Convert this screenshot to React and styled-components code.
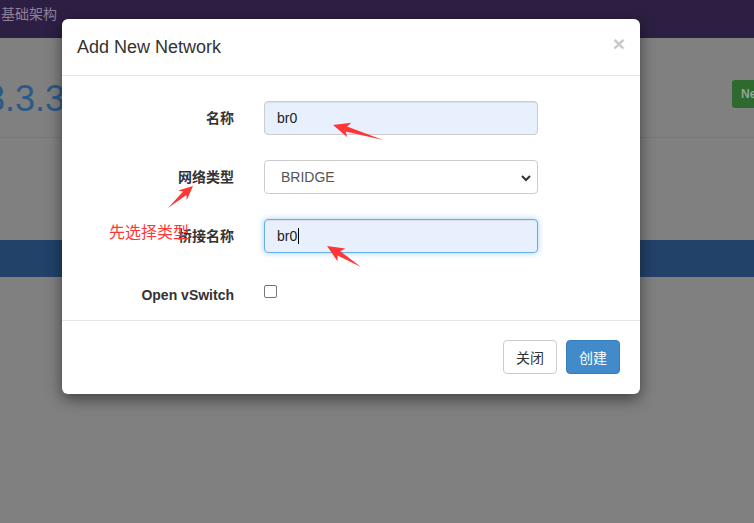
import styled, { createGlobalStyle } from "styled-components";

const GlobalStyle = createGlobalStyle`
  html, body {
    margin: 0;
    padding: 0;
  }
  body {
    width: 754px;
    height: 523px;
    overflow: hidden;
    background: #808080;
    font-family: "Liberation Sans", "Noto Sans CJK SC", sans-serif;
  }
`;

const arrowPoints = (tip, tail, headLen, headHalf, neckHalf) => {
  const dx = tail[0] - tip[0];
  const dy = tail[1] - tip[1];
  const len = Math.hypot(dx, dy);
  const d = [dx / len, dy / len];
  const n = [-d[1], d[0]];
  const at = (k, w) => [tip[0] + d[0] * k + n[0] * w, tip[1] + d[1] * k + n[1] * w];
  const pts = [
    tip,
    at(headLen, -headHalf),
    at(headLen - 3, -neckHalf),
    tail,
    at(headLen - 3, neckHalf),
    at(headLen, headHalf),
  ];
  return pts.map((p) => p.map((v) => v.toFixed(1)).join(",")).join(" ");
};

const arrows = [
  { tip: [333, 125], tail: [383, 140], head: 17, half: 7.5, neck: 2.5 },
  { tip: [193, 186], tail: [168, 208], head: 14, half: 6.5, neck: 2.5 },
  { tip: [327, 246], tail: [361, 267], head: 17, half: 7.5, neck: 2.5 },
];

const fields = [
  { label: "名称", kind: "text", value: "br0" },
  { label: "网络类型", kind: "select", value: "BRIDGE" },
  { label: "桥接名称", kind: "text", value: "br0", focused: true },
  { label: "Open vSwitch", kind: "check" },
];

const App = () => {
  return (
    <>
      <GlobalStyle />
      <Page>
        <TopBar>
          <TopTitle>基础架构</TopTitle>
        </TopBar>
        <PageHeader>
          <Version>3.3.3</Version>
          <NewButton>New</NewButton>
        </PageHeader>
        <PanelBar />
      </Page>

      <Modal>
        <ModalHeader>
          <ModalTitle>Add New Network</ModalTitle>
          <Close>×</Close>
        </ModalHeader>
        <ModalBody>
          {fields.map((f) => (
            <FormRow key={f.label}>
              <Label>{f.label}</Label>
              {f.kind === "text" && (
                <TextField $focused={f.focused}>
                  {f.value}
                  {f.focused && <Caret />}
                </TextField>
              )}
              {f.kind === "select" && (
                <SelectField>
                  <span>{f.value}</span>
                  <Chevron viewBox="0 0 12 12">
                    <path d="M2 4 L6 8 L10 4" fill="none" stroke="#333" strokeWidth="2" />
                  </Chevron>
                </SelectField>
              )}
              {f.kind === "check" && (
                <CheckWrap>
                  <CheckBox />
                </CheckWrap>
              )}
            </FormRow>
          ))}
        </ModalBody>
        <ModalFooter>
          <Button>关闭</Button>
          <Button $primary>创建</Button>
        </ModalFooter>
      </Modal>

      <Note>先选择类型</Note>
      <Arrows width="754" height="523" viewBox="0 0 754 523">
        {arrows.map((a, i) => (
          <polygon
            key={i}
            points={arrowPoints(a.tip, a.tail, a.head, a.half, a.neck)}
            fill="#ff3636"
          />
        ))}
      </Arrows>
    </>
  );
};

const Page = styled.div`
  width: 754px;
  height: 523px;
  display: flex;
  flex-direction: column;
  background: #808080;
`;

const TopBar = styled.div`
  height: 38px;
  display: flex;
  align-items: flex-start;
  background: #2d1f43;
`;

const TopTitle = styled.span`
  margin: 4px 0 0 1px;
  color: #8b809e;
  font-size: 14px;
  line-height: 18px;
  font-family: "Noto Sans CJK SC", sans-serif;
`;

const PageHeader = styled.div`
  height: 99px;
  display: flex;
  justify-content: space-between;
  align-items: flex-start;
  border-bottom: 1px solid #787878;
`;

const Version = styled.h1`
  margin: 41px 0 0 -15px;
  color: #2b5a86;
  font-size: 36px;
  font-weight: 400;
  line-height: 40px;
`;

const NewButton = styled.div`
  margin: 42px -38px 0 0;
  width: 60px;
  height: 28px;
  padding-left: 9px;
  box-sizing: border-box;
  border-radius: 3px;
  background: #2e6a30;
  color: #8fa58f;
  font-size: 12px;
  font-weight: 700;
  line-height: 28px;
`;

const PanelBar = styled.div`
  margin-top: 102px;
  height: 37px;
  background: #22426a;
`;

const Modal = styled.div`
  position: absolute;
  top: 19px;
  left: 62px;
  width: 578px;
  background: #fff;
  border-radius: 6px;
  box-shadow: 0 5px 15px rgba(0, 0, 0, 0.5);
`;

const ModalHeader = styled.div`
  display: flex;
  justify-content: space-between;
  align-items: center;
  height: 56px;
  padding: 0 15px;
  border-bottom: 1px solid #e5e5e5;
`;

const ModalTitle = styled.h4`
  margin: 0;
  color: #333;
  font-size: 18px;
  font-weight: 400;
  line-height: 26px;
`;

const Close = styled.span`
  margin-top: -8px;
  color: #c9c9c9;
  font-size: 21px;
  font-weight: 700;
  line-height: 1;
`;

const ModalBody = styled.div`
  display: grid;
  row-gap: 25px;
  padding: 25px 0 15px;
`;

const FormRow = styled.div`
  display: grid;
  grid-template-columns: 172px 274px;
  column-gap: 30px;
  align-items: start;
`;

const Label = styled.label`
  padding-top: 7px;
  text-align: right;
  color: #333;
  font-size: 14px;
  font-weight: 700;
  line-height: 20px;
  font-family: "Liberation Sans", "Noto Sans CJK SC", sans-serif;
`;

const TextField = styled.div`
  height: 34px;
  box-sizing: border-box;
  padding: 0 12px;
  display: flex;
  align-items: center;
  border: 1px solid ${({ $focused }) => ($focused ? "#66afe9" : "#ccc")};
  border-radius: 4px;
  background: #e8f0fe;
  color: #222;
  font-size: 14px;
  box-shadow: ${({ $focused }) =>
    $focused
      ? "inset 0 1px 1px rgba(0,0,0,.075), 0 0 6px rgba(102,175,233,.6)"
      : "inset 0 1px 1px rgba(0,0,0,.075)"};
`;

const Caret = styled.span`
  width: 1px;
  height: 16px;
  margin-left: 1px;
  background: #000;
`;

const SelectField = styled.div`
  position: relative;
  height: 34px;
  box-sizing: border-box;
  padding: 0 16px;
  display: flex;
  align-items: center;
  border: 1px solid #ccc;
  border-radius: 4px;
  background: #fff;
  color: #555;
  font-size: 14px;
`;

const Chevron = styled.svg`
  position: absolute;
  right: 5px;
  top: 11px;
  width: 12px;
  height: 12px;
`;

const CheckWrap = styled.div`
  padding-top: 7px;
`;

const CheckBox = styled.div`
  width: 13px;
  height: 13px;
  box-sizing: border-box;
  border: 1px solid #767676;
  border-radius: 2px;
  background: #fff;
`;

const ModalFooter = styled.div`
  display: flex;
  justify-content: flex-end;
  gap: 9px;
  padding: 19px 20px 20px;
  border-top: 1px solid #e5e5e5;
`;

const Button = styled.button`
  height: 34px;
  padding: 0 12px;
  border: 1px solid ${({ $primary }) => ($primary ? "#357ebd" : "#ccc")};
  border-radius: 4px;
  background: ${({ $primary }) => ($primary ? "#428bca" : "#fff")};
  color: ${({ $primary }) => ($primary ? "#fff" : "#333")};
  font-size: 14px;
  line-height: 20px;
  font-family: "Noto Sans CJK SC", sans-serif;
`;

const Note = styled.span`
  position: absolute;
  top: 221px;
  left: 109px;
  color: #ff3636;
  font-size: 16px;
  line-height: 20px;
  font-family: "Noto Sans CJK SC", sans-serif;
`;

const Arrows = styled.svg`
  position: absolute;
  top: 0;
  left: 0;
  pointer-events: none;
`;

export default App;
